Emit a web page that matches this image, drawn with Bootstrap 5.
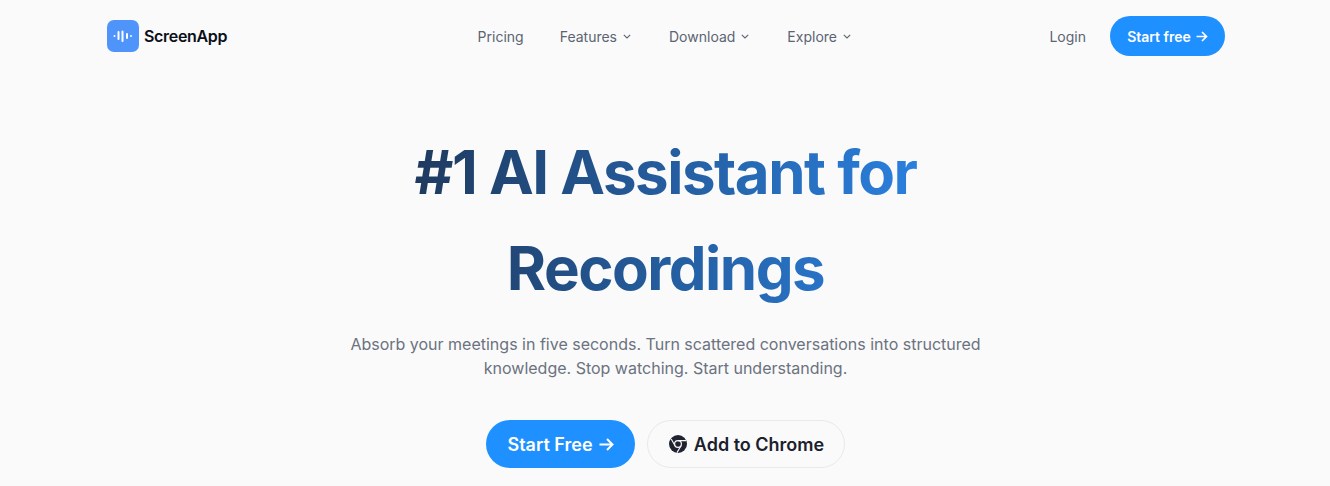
<!DOCTYPE html>
<html lang="en">

<head>
    <meta charset="UTF-8">
    <title>ScreenApp</title>
    <link href="https://cdn.jsdelivr.net/npm/bootstrap@5.3.3/dist/css/bootstrap.min.css" rel="stylesheet">
    <style>
        body {
            background: #fafafa;
            font-family: Inter, "Liberation Sans", sans-serif;
            overflow: hidden;
        }

        .top-wrap {
            width: 1118px;
            height: 72px;
            margin-left: 107px;
        }

        .logo-box {
            width: 32px;
            height: 32px;
            border-radius: 7px;
            background: #4f94fb;
        }

        .logo-name {
            font-size: 16px;
            font-weight: 600;
            color: #0b0f19;
            margin-left: 5px;
            letter-spacing: -0.02em;
        }

        .menu-row {
            margin-left: 54px;
            gap: 36px;
        }

        .menu-link {
            font-size: 14px;
            color: #5b6472;
            text-decoration: none;
        }

        .menu-link svg {
            margin-left: 6px;
            margin-right: 2px;
            margin-bottom: 3px;
        }

        .pill-blue {
            background: #1e90ff;
            color: #fff;
            border: 0;
            border-radius: 50rem;
            font-weight: 600;
        }

        .pill-blue:hover {
            background: #1e90ff;
            color: #fff;
        }

        .pill-nav {
            width: 115px;
            height: 40px;
            font-size: 14px;
            padding: 0;
            gap: 5px;
        }

        .hero-wrap {
            padding-top: 52px;
            margin-left: 1px;
        }

        .hero-title {
            display: inline-block;
            font-size: 60px;
            font-weight: 700;
            line-height: 96px;
            letter-spacing: -0.025em;
            width: 504px;
            margin-bottom: 0;
            background: linear-gradient(90deg, #1f3a5f 0%, #2a80de 100%);
            -webkit-background-clip: text;
            background-clip: text;
            color: transparent;
        }

        .hero-sub {
            font-size: 16px;
            line-height: 24px;
            color: #6b7280;
            width: 672px;
            margin: 16px auto 0;
        }

        .hero-btns {
            margin-top: 40px;
            gap: 12px;
        }

        .pill-big {
            width: 149px;
            height: 48px;
            font-size: 18px;
            padding: 0;
            gap: 6px;
        }

        .pill-ghost {
            width: 198px;
            height: 48px;
            padding: 0 0 0 1px;
            font-size: 18px;
            font-weight: 600;
            color: #1a202c;
            background: transparent;
            border: 1px solid #e8e9ec;
            border-radius: 50rem;
            gap: 7px;
        }
    </style>
</head>

<body>
    <nav class="top-wrap d-flex align-items-center justify-content-between">
        <a href="#" class="d-flex align-items-center text-decoration-none">
            <span class="logo-box d-flex align-items-center justify-content-center">
                <svg width="20" height="16" viewBox="0 0 20 16" fill="none" stroke="#fff" stroke-width="2" stroke-linecap="round">
                    <path d="M1.5 8v.1M5.5 4v7M9.5 3.5v9.5M14 6v4M18 8v.1" />
                </svg>
            </span>
            <span class="logo-name">ScreenApp</span>
        </a>

        <div class="menu-row d-flex align-items-center">
            <a href="#" class="menu-link">Pricing</a>
            <a href="#" class="menu-link">Features<svg width="8" height="5" viewBox="0 0 8 5" fill="none" stroke="#5b6472" stroke-width="1.1"><path d="M.8.8 4 4l3.2-3.2" /></svg></a>
            <a href="#" class="menu-link">Download<svg width="8" height="5" viewBox="0 0 8 5" fill="none" stroke="#5b6472" stroke-width="1.1"><path d="M.8.8 4 4l3.2-3.2" /></svg></a>
            <a href="#" class="menu-link">Explore<svg width="8" height="5" viewBox="0 0 8 5" fill="none" stroke="#5b6472" stroke-width="1.1"><path d="M.8.8 4 4l3.2-3.2" /></svg></a>
        </div>

        <div class="d-flex align-items-center gap-4">
            <a href="#" class="menu-link">Login</a>
            <button class="btn pill-blue pill-nav d-flex align-items-center justify-content-center">
                Start free
                <svg width="12" height="11" viewBox="0 0 12 11" fill="none" stroke="#fff" stroke-width="1.7"><path d="M.5 5.5h10M6 1l4.5 4.5L6 10" /></svg>
            </button>
        </div>
    </nav>

    <main class="hero-wrap text-center">
        <h1 class="hero-title">#1 AI Assistant for Recordings</h1>
        <p class="hero-sub">Absorb your meetings in five seconds. Turn scattered conversations into structured knowledge. Stop watching. Start understanding.</p>
        <div class="hero-btns d-flex justify-content-center">
            <button class="btn pill-blue pill-big d-flex align-items-center justify-content-center">
                Start Free
                <svg width="15" height="13" viewBox="0 0 15 13" fill="none" stroke="#fff" stroke-width="2"><path d="M.5 6.5h13M8 1l5.5 5.5L8 12" /></svg>
            </button>
            <button class="btn pill-ghost d-flex align-items-center justify-content-center">
                <svg width="18" height="18" viewBox="0 0 18 18">
                    <circle cx="9" cy="9" r="9" fill="#1f2430" />
                    <circle cx="9" cy="9" r="3.4" fill="none" stroke="#fafafa" stroke-width="1.2" />
                    <path d="M9 5.6h8M6 10.7 2.2 4M12 10.7 8 17.6" stroke="#fafafa" stroke-width="1.1" fill="none" />
                </svg>
                Add to Chrome
            </button>
        </div>
    </main>
</body>

</html>
